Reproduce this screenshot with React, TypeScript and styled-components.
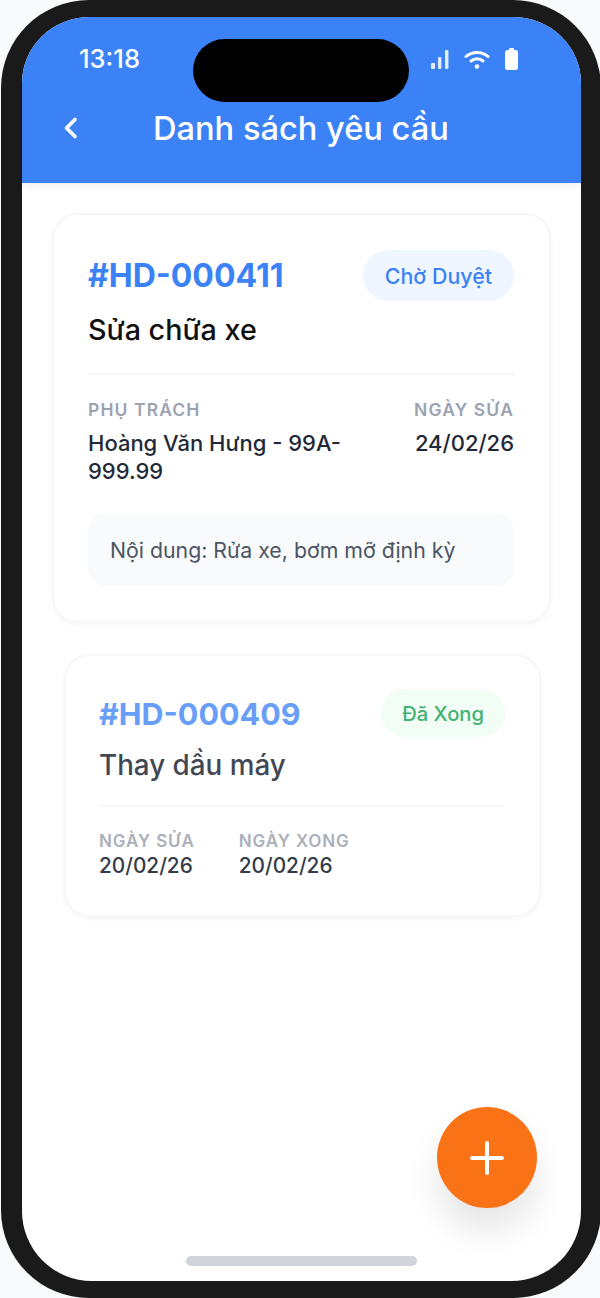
import React from 'react';
import styled, { createGlobalStyle } from 'styled-components';

const GlobalStyle = createGlobalStyle`
  html, body {
    margin: 0;
    padding: 0;
    background: #f8fafc;
    overflow: hidden;
    font-family: 'Inter', 'Liberation Sans', sans-serif;
  }
  * { box-sizing: border-box; }
`;

const Frame = styled.div`
  width: 600px;
  height: 1298px;
  margin-left: 1px;
  padding: 17px 20px 17px 21px;
  background: #1a1a1a;
  border-radius: 88px;
`;

const Screen = styled.div`
  position: relative;
  height: 100%;
  display: flex;
  flex-direction: column;
  background: #fff;
  border-radius: 68px 68px 70px 70px / 66px 66px 70px 70px;
  overflow: hidden;
`;

const Island = styled.div`
  position: absolute;
  top: 22px;
  left: 171px;
  width: 216px;
  height: 63px;
  border-radius: 32px;
  background: #000;
`;

const Header = styled.header`
  height: 166px;
  flex-shrink: 0;
  padding: 26px 63px 0 40px;
  background: #3b82f6;
  color: #fff;
  box-shadow: 0 2px 10px rgba(0, 0, 0, 0.08);
`;

const StatusBar = styled.div`
  display: flex;
  align-items: center;
  justify-content: space-between;
  height: 32px;
`;

const Time = styled.span`
  margin: 0 0 2px 17px;
  font-size: 25.5px;
  font-weight: 500;
`;

const StatusIcons = styled.div`
  display: flex;
  align-items: center;
  gap: 15px;
`;

const TitleRow = styled.div`
  display: flex;
  align-items: center;
  height: 44px;
  margin-top: 31px;
`;

const BackIcon = styled.svg`
  width: 18px;
  height: 24px;
  fill: none;
  stroke: #fff;
  stroke-width: 3.6;
  stroke-linecap: round;
  stroke-linejoin: round;
`;

const Title = styled.h1`
  margin: 0 0 0 73px;
  font-size: 32.6px;
  font-weight: 500;
  white-space: nowrap;
`;

const List = styled.main`
  display: flex;
  flex-direction: column;
  gap: 31px;
  padding: 30px 30px 0;
`;

const Card = styled.article<{ $muted?: boolean }>`
  display: flex;
  flex-direction: column;
  background: #fff;
  border: 2px solid #f5f6f8;
  border-radius: 26px;
  box-shadow: 0 2px 6px rgba(0, 0, 0, 0.04);
  padding: ${(p) => (p.$muted ? '33px 34px 35px 33px' : '35px 35px 35px 34px')};
  margin: ${(p) => (p.$muted ? '0 10px 0 12px' : '0')};
  opacity: ${(p) => (p.$muted ? 0.85 : 1)};
`;

const CardTop = styled.div`
  display: flex;
  align-items: center;
  justify-content: space-between;
`;

const Code = styled.span<{ $muted?: boolean }>`
  font-size: ${(p) => (p.$muted ? '30.5px' : '32px')};
  font-weight: 700;
  color: ${(p) => (p.$muted ? '#4f8ef7' : '#3b82f6')};
`;

const Badge = styled.span<{ $tone: 'blue' | 'green' }>`
  display: flex;
  align-items: center;
  height: ${(p) => (p.$tone === 'blue' ? '51px' : '48px')};
  padding: 0 ${(p) => (p.$tone === 'blue' ? '22px' : '21px')};
  border-radius: 26px;
  font-size: ${(p) => (p.$tone === 'blue' ? '21.4px' : '20.2px')};
  font-weight: 500;
  background: ${(p) => (p.$tone === 'blue' ? '#eff6ff' : '#f0fdf4')};
  color: ${(p) => (p.$tone === 'blue' ? '#3b82f6' : '#22a55a')};
`;

const JobName = styled.h2<{ $muted?: boolean }>`
  margin: ${(p) => (p.$muted ? '10px 0 22px' : '11px 0 25px')};
  font-size: ${(p) => (p.$muted ? '27.8px' : '28.7px')};
  line-height: 36px;
  font-weight: 500;
  color: ${(p) => (p.$muted ? '#1f2937' : '#111')};
`;

const Meta = styled.div<{ $spread?: boolean }>`
  display: flex;
  justify-content: ${(p) => (p.$spread ? 'space-between' : 'flex-start')};
  gap: ${(p) => (p.$spread ? '16px' : '44px')};
  border-top: 2px solid #f5f6f8;
  padding-top: ${(p) => (p.$spread ? '24px' : '23px')};
`;

const MetaCol = styled.div<{ $right?: boolean; $wide?: boolean; $tight?: boolean }>`
  display: flex;
  flex-direction: column;
  gap: ${(p) => (p.$tight ? '0' : '8px')};
  width: ${(p) => (p.$wide ? '270px' : 'auto')};
  align-items: ${(p) => (p.$right ? 'flex-end' : 'flex-start')};
`;

const Label = styled.span<{ $small?: boolean }>`
  font-size: ${(p) => (p.$small ? '17px' : '17.5px')};
  line-height: 22px;
  font-weight: 600;
  letter-spacing: ${(p) => (p.$small ? '0.9px' : '1.1px')};
  color: #9ca3af;
`;

const Value = styled.span<{ $small?: boolean }>`
  font-size: ${(p) => (p.$small ? '20.8px' : '22px')};
  line-height: 28px;
  font-weight: 500;
  color: ${(p) => (p.$small ? '#111827' : '#1f2937')};
`;

const Note = styled.div`
  margin-top: 28px;
  height: 73px;
  display: flex;
  align-items: center;
  padding: 0 22px;
  border-radius: 18px;
  background: #f8fafc;
  font-size: 21.3px;
  color: #4b5563;
`;

const Fab = styled.button`
  position: absolute;
  right: 44px;
  bottom: 73px;
  width: 100px;
  height: 101px;
  display: flex;
  align-items: center;
  justify-content: center;
  padding: 0;
  border: 0;
  border-radius: 50%;
  background: #f97316;
  box-shadow: 0 22px 34px rgba(0, 0, 0, 0.1);
`;

const PlusIcon = styled.svg`
  width: 34px;
  height: 34px;
  stroke: #fff;
  stroke-width: 4;
  stroke-linecap: round;
`;

const HomeBar = styled.div`
  position: absolute;
  left: 164px;
  bottom: 15px;
  width: 231px;
  height: 10px;
  border-radius: 5px;
  background: #d1d5db;
`;

const App = () => (
  <>
    <GlobalStyle />
    <Frame>
      <Screen>
        <Header>
          <StatusBar>
            <Time>13:18</Time>
            <StatusIcons>
              <svg width="18" height="19" viewBox="0 0 18 19" fill="#fff" style={{ opacity: 0.85 }}>
                <rect x="0" y="13" width="4" height="6" rx="1" />
                <rect x="7" y="7" width="3.4" height="12" rx="1" />
                <rect x="14" y="0" width="3.4" height="19" rx="1" />
              </svg>
              <svg width="26" height="19" viewBox="0 0 26 19" fill="none" stroke="#fff" strokeWidth="3" strokeLinecap="round">
                <path d="M2 6.5C8 1 18 1 24 6.5" />
                <path d="M7 11C10.5 8 15.5 8 19 11" />
                <circle cx="13" cy="16.5" r="2.3" fill="#fff" stroke="none" />
              </svg>
              <svg width="13" height="22" viewBox="0 0 13 22" fill="#fff">
                <rect x="4" y="0" width="5" height="3" rx="1" />
                <rect x="0" y="2" width="13" height="20" rx="2.5" />
              </svg>
            </StatusIcons>
          </StatusBar>
          <TitleRow>
            <BackIcon viewBox="0 0 18 24">
              <path d="M13 3.5L4.5 12L13 20.5" />
            </BackIcon>
            <Title>Danh sách yêu cầu</Title>
          </TitleRow>
        </Header>
        <List>
          <Card>
            <CardTop>
              <Code>#HD-000411</Code>
              <Badge $tone="blue">Chờ Duyệt</Badge>
            </CardTop>
            <JobName>Sửa chữa xe</JobName>
            <Meta $spread>
              <MetaCol $wide>
                <Label>PHỤ TRÁCH</Label>
                <Value>Hoàng Văn Hưng - 99A-999.99</Value>
              </MetaCol>
              <MetaCol $right>
                <Label>NGÀY SỬA</Label>
                <Value>24/02/26</Value>
              </MetaCol>
            </Meta>
            <Note>Nội dung: Rửa xe, bơm mỡ định kỳ</Note>
          </Card>
          <Card $muted>
            <CardTop>
              <Code $muted>#HD-000409</Code>
              <Badge $tone="green">Đã Xong</Badge>
            </CardTop>
            <JobName $muted>Thay dầu máy</JobName>
            <Meta>
              <MetaCol $tight>
                <Label $small>NGÀY SỬA</Label>
                <Value $small>20/02/26</Value>
              </MetaCol>
              <MetaCol $tight>
                <Label $small>NGÀY XONG</Label>
                <Value $small>20/02/26</Value>
              </MetaCol>
            </Meta>
          </Card>
        </List>
        <Island />
        <Fab aria-label="Thêm">
          <PlusIcon viewBox="0 0 34 34">
            <path d="M17 2V32M2 17H32" />
          </PlusIcon>
        </Fab>
        <HomeBar />
      </Screen>
    </Frame>
  </>
);

export default App;
